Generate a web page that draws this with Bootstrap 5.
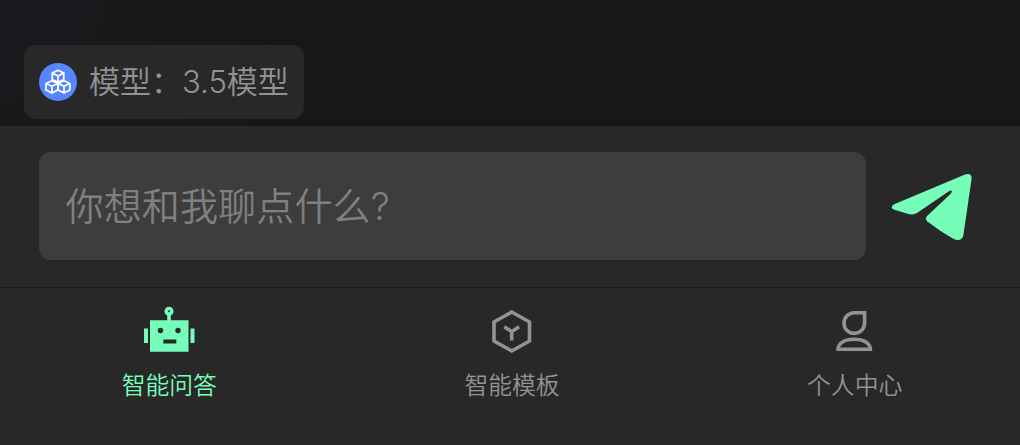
<!DOCTYPE html>
<html lang="zh-CN">
<head>
    <meta charset="UTF-8">
    <meta name="viewport" content="width=device-width, initial-scale=1.0">
    <title>智能问答</title>
    <link href="https://cdn.jsdelivr.net/npm/bootstrap@5.3.0/dist/css/bootstrap.min.css" rel="stylesheet">
    <style>
        body {
            height: 445px;
            background: #282828;
            color: #939393;
            font-family: Inter, "Noto Sans CJK SC", sans-serif;
            font-weight: 350;
        }
        .chat-area {
            height: 126px;
            padding: 45px 0 0 24px;
            background: radial-gradient(circle at 0 0, #1a1a1f 0, #171717 280px);
        }
        .model-chip {
            width: 280px;
            height: 74px;
            padding-left: 15px;
            border-radius: 12px;
            background: #282828;
            font-size: 31px;
            line-height: 1;
        }
        .model-chip svg {
            margin-right: 12px;
        }
        .model-chip span {
            padding-bottom: 2px;
        }
        .ask-bar {
            height: 161px;
            padding: 26px 44px 27px 38.5px;
        }
        .ask-input, .ask-input:focus {
            width: 827.5px;
            height: 108px;
            padding: 0 27px;
            border: 0;
            border-radius: 12px;
            background: #3d3d3d;
            color: #ccc;
            font-size: 38px;
            font-weight: 350;
            letter-spacing: .15px;
            box-shadow: none;
        }
        .ask-input::placeholder {
            color: #808080;
            opacity: 1;
        }
        .send-btn {
            margin-left: 22px;
            padding: 2px 0 0;
            color: #76fdba;
        }
        .tab-bar {
            width: 1028px;
            height: 158px;
            margin-left: -2px;
            padding-top: 18px;
            border-top: 1px solid #181818;
        }
        .tab-item {
            color: #939393;
            font-size: 23.8px;
            line-height: 30px;
        }
        .tab-item.active {
            color: #76fdba;
        }
        .tab-item svg {
            margin-bottom: 17px;
        }
    </style>
</head>
<body class="overflow-hidden">
    <main class="chat-area">
        <div class="model-chip d-flex align-items-center text-nowrap">
            <svg class="flex-shrink-0" width="38" height="38" viewBox="0 0 38 38">
                <circle cx="19" cy="19" r="19" fill="#5585ff"/>
                <g fill="none" stroke="#fff" stroke-width="1.7" stroke-linejoin="round">
                    <path d="M19 7.2l5.8 2.9v6.3L19 19.2l-5.8-2.8v-6.3zM13.2 10.1l5.8 2.8 5.8-2.8M19 12.9v6.3"/>
                    <path d="M12.9 17.7l5.9 2.8v6.6L12.9 30 7 27.1v-6.6zM7 20.5l5.9 2.8 5.9-2.8M12.9 23.3V30"/>
                    <path d="M25 17.7l5.9 2.8v6.6L25 30l-5.9-2.9v-6.6zM19.1 20.5l5.9 2.8 5.9-2.8M25 23.3V30"/>
                </g>
            </svg>
            <span>模型：3.5模型</span>
        </div>
    </main>

    <form class="ask-bar d-flex align-items-center">
        <input type="text" class="form-control flex-shrink-0 ask-input" placeholder="你想和我聊点什么?">
        <button type="button" class="btn border-0 send-btn" aria-label="发送">
            <svg class="d-block" width="88" height="74" viewBox="0 0 88 74" fill="currentColor">
                <path d="M77 4.6C81 3 84 4.4 83.6 8.8L75.4 65c-.8 5-5.5 6.3-10 3.7C56 63.8 48 57.8 40 52c-2.7-2-2.5-4.3-.4-6.4L62.5 24c2.5-3 1.5-4.5-2-2.6L30.5 42c-3.5 2.6-7 2.9-11 1.7L6.5 39.7C3 38.6 3 36 6.2 34.2z"/>
            </svg>
        </button>
    </form>

    <nav class="tab-bar d-flex text-center">
        <a href="#" class="tab-item active col-4 text-decoration-none">
            <svg class="d-block mx-auto" width="52" height="48" viewBox="0 0 52 48">
                <path d="M26 9v8" stroke="currentColor" stroke-width="3.6"/>
                <circle cx="26" cy="5.2" r="2.8" fill="none" stroke="currentColor" stroke-width="3.5"/>
                <path fill="currentColor" d="M7 14.3h38.5v31.5H7zM1 22.5h4V37H1zM47.5 22.5h4V37h-4z"/>
                <circle cx="17.5" cy="24.5" r="2.7" fill="#282828"/>
                <circle cx="35" cy="24.5" r="2.7" fill="#282828"/>
                <path fill="#282828" d="M20.3 33.5h13v4h-13z"/>
            </svg>
            <span>智能问答</span>
        </a>
        <a href="#" class="tab-item col-4 text-decoration-none">
            <svg class="d-block mx-auto" width="52" height="48" viewBox="0 0 52 48" fill="none" stroke="currentColor" stroke-width="3.6">
                <path d="M25.7 6L43.5 16v19L25.7 45 8 35V16z"/>
                <path d="M18.3 20.7l7.4 5 7.4-5M25.7 25v9.5"/>
            </svg>
            <span>智能模板</span>
        </a>
        <a href="#" class="tab-item col-4 text-decoration-none">
            <svg class="d-block mx-auto" width="52" height="48" viewBox="0 0 52 48" fill="none" stroke="currentColor" stroke-width="3.6">
                <path d="M35.6 6.8H25.3A10.3 10.3 0 1 0 35.6 17z"/>
                <path d="M9 43.3c0-6.3 7-10 16.2-10s16.2 3.7 16.2 10z"/>
            </svg>
            <span>个人中心</span>
        </a>
    </nav>

    <script src="https://cdn.jsdelivr.net/npm/bootstrap@5.3.0/dist/js/bootstrap.bundle.min.js"></script>
</body>
</html>
